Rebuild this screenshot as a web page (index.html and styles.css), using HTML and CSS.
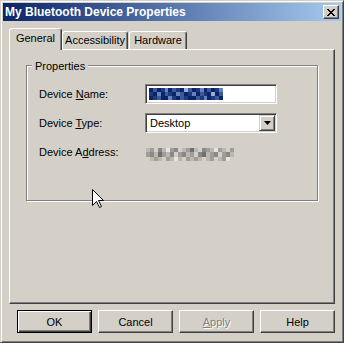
FILE: index.html
```html
<!DOCTYPE html>
<html>
<head>
<meta charset="utf-8">
<link rel="stylesheet" href="styles.css">
</head>
<body>
<div class="window">
  <div class="titlebar">
    <span class="title">My Bluetooth Device Properties</span>
    <div class="close">
      <svg width="8" height="7" viewBox="0 0 8 7"><path fill="#000" d="M0 0h2v1H0zM6 0h2v1H6zM1 1h2v1H1zM5 1h2v1H5zM2 2h4v1H2zM3 3h2v1H3zM2 4h4v1H2zM1 5h2v1H1zM5 5h2v1H5zM0 6h2v1H0zM6 6h2v1H6z"/></svg>
    </div>
  </div>
  <div class="content">
    <div class="tabs">
      <div class="tab selected tab-general">General</div>
      <div class="tab tab-access">Accessibility</div>
      <div class="tab tab-hardware">Hardware</div>
    </div>
    <div class="panel">
      <div class="group">
        <span class="legend">Properties</span>
        <div class="row">
          <span class="label">Device <u>N</u>ame:</span>
          <div class="field">
            <svg class="mosaic" width="74" height="12" viewBox="0 0 76 12">
              <g shape-rendering="crispEdges">
                <rect x="0" y="0" width="4" height="4" fill="#0a246a"/><rect x="4" y="0" width="4" height="4" fill="#3a5a98"/><rect x="8" y="0" width="4" height="4" fill="#0a246a"/><rect x="12" y="0" width="4" height="4" fill="#1f3a7c"/><rect x="16" y="0" width="4" height="4" fill="#6a82b8"/><rect x="20" y="0" width="4" height="4" fill="#0a246a"/><rect x="24" y="0" width="4" height="4" fill="#3a5a98"/><rect x="28" y="0" width="4" height="4" fill="#1f3a7c"/><rect x="32" y="0" width="4" height="4" fill="#0a246a"/><rect x="36" y="0" width="4" height="4" fill="#9aaad0"/><rect x="40" y="0" width="4" height="4" fill="#3a5a98"/><rect x="44" y="0" width="4" height="4" fill="#0a246a"/><rect x="48" y="0" width="4" height="4" fill="#1f3a7c"/><rect x="52" y="0" width="4" height="4" fill="#6a82b8"/><rect x="56" y="0" width="4" height="4" fill="#0a246a"/><rect x="60" y="0" width="4" height="4" fill="#3a5a98"/><rect x="64" y="0" width="4" height="4" fill="#0a246a"/><rect x="68" y="0" width="4" height="4" fill="#1f3a7c"/><rect x="72" y="0" width="4" height="4" fill="#6a82b8"/>
                <rect x="0" y="4" width="4" height="4" fill="#1f3a7c"/><rect x="4" y="4" width="4" height="4" fill="#0a246a"/><rect x="8" y="4" width="4" height="4" fill="#6a82b8"/><rect x="12" y="4" width="4" height="4" fill="#0a246a"/><rect x="16" y="4" width="4" height="4" fill="#3a5a98"/><rect x="20" y="4" width="4" height="4" fill="#1f3a7c"/><rect x="24" y="4" width="4" height="4" fill="#0a246a"/><rect x="28" y="4" width="4" height="4" fill="#6a82b8"/><rect x="32" y="4" width="4" height="4" fill="#3a5a98"/><rect x="36" y="4" width="4" height="4" fill="#0a246a"/><rect x="40" y="4" width="4" height="4" fill="#1f3a7c"/><rect x="44" y="4" width="4" height="4" fill="#6a82b8"/><rect x="48" y="4" width="4" height="4" fill="#0a246a"/><rect x="52" y="4" width="4" height="4" fill="#3a5a98"/><rect x="56" y="4" width="4" height="4" fill="#1f3a7c"/><rect x="60" y="4" width="4" height="4" fill="#0a246a"/><rect x="64" y="4" width="4" height="4" fill="#9aaad0"/><rect x="68" y="4" width="4" height="4" fill="#0a246a"/><rect x="72" y="4" width="4" height="4" fill="#3a5a98"/>
                <rect x="0" y="8" width="4" height="4" fill="#0a246a"/><rect x="4" y="8" width="4" height="4" fill="#1f3a7c"/><rect x="8" y="8" width="4" height="4" fill="#3a5a98"/><rect x="12" y="8" width="4" height="4" fill="#0a246a"/><rect x="16" y="8" width="4" height="4" fill="#0a246a"/><rect x="20" y="8" width="4" height="4" fill="#6a82b8"/><rect x="24" y="8" width="4" height="4" fill="#1f3a7c"/><rect x="28" y="8" width="4" height="4" fill="#0a246a"/><rect x="32" y="8" width="4" height="4" fill="#3a5a98"/><rect x="36" y="8" width="4" height="4" fill="#1f3a7c"/><rect x="40" y="8" width="4" height="4" fill="#0a246a"/><rect x="44" y="8" width="4" height="4" fill="#0a246a"/><rect x="48" y="8" width="4" height="4" fill="#3a5a98"/><rect x="52" y="8" width="4" height="4" fill="#1f3a7c"/><rect x="56" y="8" width="4" height="4" fill="#6a82b8"/><rect x="60" y="8" width="4" height="4" fill="#0a246a"/><rect x="64" y="8" width="4" height="4" fill="#1f3a7c"/><rect x="68" y="8" width="4" height="4" fill="#3a5a98"/><rect x="72" y="8" width="4" height="4" fill="#0a246a"/>
              </g>
            </svg>
          </div>
        </div>
        <div class="row">
          <span class="label">Device <u>T</u>ype:</span>
          <div class="field select">
            <span class="value">Desktop</span>
            <span class="ddbtn"><svg width="7" height="4" viewBox="0 0 7 4"><path fill="#000" d="M0 0h7L3.5 4z"/></svg></span>
          </div>
        </div>
        <div class="row">
          <span class="label">Device A<u>d</u>dress:</span>
          <svg class="address" width="88" height="13" viewBox="0 0 88 13">
            <g shape-rendering="crispEdges">
              <rect x="0" y="0" width="4" height="4" fill="#bcb8b0"/><rect x="4" y="0" width="4" height="4" fill="#a09c98"/><rect x="8" y="0" width="4" height="4" fill="#d4d0c8"/><rect x="12" y="0" width="4" height="4" fill="#888888"/><rect x="16" y="0" width="4" height="4" fill="#bcb8b0"/><rect x="20" y="0" width="4" height="4" fill="#e8e4dc"/><rect x="24" y="0" width="4" height="4" fill="#a09c98"/><rect x="28" y="0" width="4" height="4" fill="#888888"/><rect x="32" y="0" width="4" height="4" fill="#d4d0c8"/><rect x="36" y="0" width="4" height="4" fill="#bcb8b0"/><rect x="40" y="0" width="4" height="4" fill="#a09c98"/><rect x="44" y="0" width="4" height="4" fill="#707070"/><rect x="48" y="0" width="4" height="4" fill="#bcb8b0"/><rect x="52" y="0" width="4" height="4" fill="#d4d0c8"/><rect x="56" y="0" width="4" height="4" fill="#888888"/><rect x="60" y="0" width="4" height="4" fill="#a09c98"/><rect x="64" y="0" width="4" height="4" fill="#bcb8b0"/><rect x="68" y="0" width="4" height="4" fill="#e8e4dc"/><rect x="72" y="0" width="4" height="4" fill="#a09c98"/><rect x="76" y="0" width="4" height="4" fill="#bcb8b0"/><rect x="80" y="0" width="4" height="4" fill="#d4d0c8"/><rect x="84" y="0" width="4" height="4" fill="#a09c98"/>
              <rect x="0" y="4" width="4" height="5" fill="#a09c98"/><rect x="4" y="4" width="4" height="5" fill="#888888"/><rect x="8" y="4" width="4" height="5" fill="#bcb8b0"/><rect x="12" y="4" width="4" height="5" fill="#707070"/><rect x="16" y="4" width="4" height="5" fill="#a09c98"/><rect x="20" y="4" width="4" height="5" fill="#bcb8b0"/><rect x="24" y="4" width="4" height="5" fill="#888888"/><rect x="28" y="4" width="4" height="5" fill="#d4d0c8"/><rect x="32" y="4" width="4" height="5" fill="#a09c98"/><rect x="36" y="4" width="4" height="5" fill="#888888"/><rect x="40" y="4" width="4" height="5" fill="#bcb8b0"/><rect x="44" y="4" width="4" height="5" fill="#a09c98"/><rect x="48" y="4" width="4" height="5" fill="#d4d0c8"/><rect x="52" y="4" width="4" height="5" fill="#888888"/><rect x="56" y="4" width="4" height="5" fill="#707070"/><rect x="60" y="4" width="4" height="5" fill="#bcb8b0"/><rect x="64" y="4" width="4" height="5" fill="#a09c98"/><rect x="68" y="4" width="4" height="5" fill="#888888"/><rect x="72" y="4" width="4" height="5" fill="#d4d0c8"/><rect x="76" y="4" width="4" height="5" fill="#a09c98"/><rect x="80" y="4" width="4" height="5" fill="#888888"/><rect x="84" y="4" width="4" height="5" fill="#bcb8b0"/>
              <rect x="0" y="9" width="4" height="4" fill="#d4d0c8"/><rect x="4" y="9" width="4" height="4" fill="#bcb8b0"/><rect x="8" y="9" width="4" height="4" fill="#a09c98"/><rect x="12" y="9" width="4" height="4" fill="#bcb8b0"/><rect x="16" y="9" width="4" height="4" fill="#d4d0c8"/><rect x="20" y="9" width="4" height="4" fill="#a09c98"/><rect x="24" y="9" width="4" height="4" fill="#bcb8b0"/><rect x="28" y="9" width="4" height="4" fill="#e8e4dc"/><rect x="32" y="9" width="4" height="4" fill="#bcb8b0"/><rect x="36" y="9" width="4" height="4" fill="#d4d0c8"/><rect x="40" y="9" width="4" height="4" fill="#a09c98"/><rect x="44" y="9" width="4" height="4" fill="#bcb8b0"/><rect x="48" y="9" width="4" height="4" fill="#a09c98"/><rect x="52" y="9" width="4" height="4" fill="#bcb8b0"/><rect x="56" y="9" width="4" height="4" fill="#d4d0c8"/><rect x="60" y="9" width="4" height="4" fill="#bcb8b0"/><rect x="64" y="9" width="4" height="4" fill="#a09c98"/><rect x="68" y="9" width="4" height="4" fill="#d4d0c8"/><rect x="72" y="9" width="4" height="4" fill="#bcb8b0"/><rect x="76" y="9" width="4" height="4" fill="#a09c98"/><rect x="80" y="9" width="4" height="4" fill="#e8e4dc"/><rect x="84" y="9" width="4" height="4" fill="#d4d0c8"/>
            </g>
          </svg>
        </div>
      </div>
    </div>
    <div class="buttons">
      <button class="btn default">OK</button>
      <button class="btn">Cancel</button>
      <button class="btn disabled"><u>A</u>pply</button>
      <button class="btn">Help</button>
    </div>
  </div>
  <svg class="cursor" width="12" height="20" viewBox="0 0 12 20">
    <path d="M0.5 0.5V16.5L4.5 12.5L7.5 18.5L9.5 17.5L6.5 11.5H11.5Z" fill="#fff" stroke="#000" stroke-width="1" stroke-linejoin="miter"/>
  </svg>
</div>
</body>
</html>
```

FILE: styles.css
```css
* {
  box-sizing: border-box;
}

html,
body {
  margin: 0;
  padding: 0;
}

body {
  width: 344px;
  height: 343px;
  overflow: hidden;
  background: #d4d0c8;
  font-family: "Liberation Sans", Arial, sans-serif;
  font-size: 11px;
  color: #000;
}

.window {
  position: relative;
  width: 344px;
  height: 343px;
  display: flex;
  flex-direction: column;
  background: #d4d0c8;
  border: 1px solid;
  border-color: #d4d0c8 #404040 #404040 #d4d0c8;
  box-shadow: inset 1px 1px #fff, inset -1px -1px #808080;
  padding: 2px;
}

.titlebar {
  height: 18px;
  flex: none;
  display: flex;
  align-items: center;
  justify-content: space-between;
  padding: 0 2px 0 2px;
  background: linear-gradient(to right, #0a246a, #a6caf0);
}

.title {
  color: #fff;
  font-weight: bold;
  font-size: 12px;
  white-space: nowrap;
}

.close {
  width: 16px;
  height: 14px;
  display: flex;
  align-items: center;
  justify-content: center;
  background: #d4d0c8;
  border: 1px solid;
  border-color: #fff #404040 #404040 #fff;
  box-shadow: inset -1px -1px #808080;
}

.close svg {
  display: block;
}

.content {
  flex: 1;
  display: flex;
  flex-direction: column;
  padding: 7px 6px 7px 6px;
}

.tabs {
  position: relative;
  z-index: 1;
  height: 21px;
  flex: none;
  display: flex;
  align-items: flex-end;
}

.tab {
  height: 18px;
  line-height: 16px;
  text-align: center;
  background: #d4d0c8;
  border-top: 1px solid #fff;
  border-left: 1px solid #fff;
  border-right: 1px solid #404040;
  box-shadow: inset -1px 0 #808080;
  border-radius: 3px 3px 0 0;
  white-space: nowrap;
}

.tab.selected {
  height: 22px;
  margin-bottom: -1px;
  padding-top: 1px;
}

.tab-general {
  width: 53px;
}

.tab-access {
  width: 66px;
}

.tab-hardware {
  width: 58px;
  margin-left: 1px;
}

.panel {
  height: 255px;
  flex: none;
  border-top: 1px solid #fff;
  border-left: 1px solid #fff;
  border-right: 1px solid #404040;
  border-bottom: 1px solid #404040;
  box-shadow: inset -1px -1px #808080;
  padding: 15px 16px 0 16px;
}

.group {
  position: relative;
  height: 136px;
  border: 1px solid #808080;
  box-shadow: inset 1px 1px #fff, 1px 1px #fff;
  padding: 18px 12px 0 12px;
  display: flex;
  flex-direction: column;
  gap: 9px;
}

.legend {
  position: absolute;
  top: -6px;
  left: 5px;
  padding: 0 3px;
  line-height: 13px;
  background: #d4d0c8;
}

.row {
  height: 20px;
  display: flex;
  align-items: center;
}

.label {
  flex: 0 0 106px;
  white-space: nowrap;
}

.field {
  width: 132px;
  height: 20px;
  display: flex;
  align-items: center;
  background: #fff;
  border: 1px solid;
  border-color: #808080 #fff #fff #808080;
  box-shadow: inset 1px 1px #404040, inset -1px -1px #d4d0c8;
  padding: 1px 3px 1px 3px;
}

.mosaic {
  display: block;
}

.field.select {
  padding: 1px 1px 1px 4px;
}

.value {
  flex: 1;
}

.ddbtn {
  width: 16px;
  height: 16px;
  display: flex;
  align-items: center;
  justify-content: center;
  background: #d4d0c8;
  border: 1px solid;
  border-color: #d4d0c8 #404040 #404040 #d4d0c8;
  box-shadow: inset 1px 1px #fff, inset -1px -1px #808080;
}

.ddbtn svg {
  display: block;
}

.address {
  display: block;
  margin-left: 1px;
  margin-top: 4px;
}

.buttons {
  flex: none;
  display: flex;
  justify-content: flex-end;
  gap: 6px;
  margin-top: 6px;
}

.btn {
  width: 75px;
  height: 23px;
  padding: 0;
  font-family: "Liberation Sans", Arial, sans-serif;
  font-size: 11px;
  color: #000;
  background: #d4d0c8;
  border: 1px solid;
  border-color: #fff #404040 #404040 #fff;
  box-shadow: inset -1px -1px #808080;
}

.btn.default {
  border: 1px solid #000;
  box-shadow: inset 1px 1px #fff, inset -1px -1px #404040, inset -2px -2px #808080;
}

.btn.disabled {
  color: #808080;
  text-shadow: 1px 1px #fff;
}

.cursor {
  position: absolute;
  left: 91px;
  top: 188px;
}
```
